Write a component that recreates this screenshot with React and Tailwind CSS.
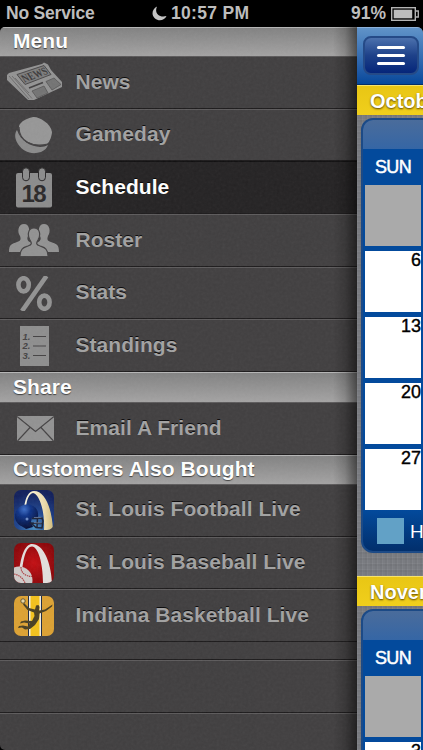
import React from "react"

const SHADOW = "[text-shadow:0_-1px_0_rgba(0,0,0,0.85)]"

function NewsIcon() {
  return (
    <svg width="58" height="40" viewBox="0 0 58 40">
      <path d="M2 13 L4 11 L37 2 L39 0.500 L43 2.500 L46 8 L57 20 L57 25 L29 38 L23 38 L2 18 Z" fill="#939393" />
      <path d="M4 14 L24 37 M7 14 L27 36.500 M10 16 L24 31" stroke="#605e5f" strokeWidth="0.7" fill="none" />
      <path d="M12 12.500 L39 3.500 L46 12.500 L20 22.500 Z" fill="#7d7d7d" stroke="#4a4849" strokeWidth="1" />
      <text x="0" y="0" transform="translate(19.500 20.500) rotate(-20) skewX(14)" fontFamily="Liberation Serif, serif" fontWeight="bold" fontSize="11.5" fill="#3c3a3b" textLength="26" lengthAdjust="spacingAndGlyphs">NEWS</text>
      <path d="M24 26 L38 20.500" stroke="#434142" strokeWidth="1.800" />
      <path d="M27 29 L39 24 L43 31 L32 36 Z M41 19.500 L49 16 L56 22.500 L47 28 Z" fill="#747474" stroke="#575556" strokeWidth="0.8" />
    </svg>
  )
}

function GamedayIcon() {
  return (
    <svg width="40" height="38" viewBox="0 0 40 38">
      <path d="M3 14 C0 18 1 24 4 28 C9 36 18 39 27 36 C31 34 33 32 34 29 C25 34 8 29 3 14 Z" fill="#8b8b8b" />
      <path d="M19 1 C24 0 37 7 38 16 C38 19 36 26 33 28 C26 31 12 28 7 20 C5 16 4 10 6 8 C9 4 14 2 19 1 Z" fill="#979797" />
      <path d="M5 11 C5 25 18 32 34 28" fill="none" stroke="#454344" strokeWidth="1.200" />
    </svg>
  )
}

function ScheduleIcon() {
  return (
    <svg width="38" height="41" viewBox="0 0 38 41">
      <rect x="1" y="6" width="36" height="34.500" rx="2" fill="#8c8c8c" />
      <rect x="7.500" y="0.800" width="7" height="13" rx="3.500" fill="#8c8c8c" stroke="#2b292a" strokeWidth="1" />
      <rect x="23.500" y="0.800" width="7" height="13" rx="3.500" fill="#8c8c8c" stroke="#2b292a" strokeWidth="1" />
      <text x="19" y="34.500" textAnchor="middle" fontFamily="Liberation Sans, sans-serif" fontWeight="bold" fontSize="24" textLength="25" fill="#2b292a">18</text>
    </svg>
  )
}

function RosterIcon() {
  return (
    <svg width="52" height="34" viewBox="0 0 52 34" fill="#929292">
      <path d="M1 29 C1 21 4 21 9 19 C13 18 13 16 12 13 C9 9 10 1 16 1 C22 1 22 9 20 13 C18 17 21 19 24 20 L24 29 Z" />
      <path d="M51 29 C51 21 48 21 43 19 C39 18 39 16 40 13 C43 9 42 1 36 1 C30 1 30 9 32 13 C34 17 31 19 28 20 L28 29 Z" />
      <path d="M12 33.500 C12 25 16 24.500 20 23 C24 22 24 20 22 17 C19 12 20 5 26 5 C32 5 33 12 30 17 C28 20 28 22 32 23 C36 24.500 40 25 40 33.500 Z" stroke="#454344" strokeWidth="1.200" />
    </svg>
  )
}

function StatsIcon() {
  return (
    <svg width="36" height="35" viewBox="0 0 36 35" fill="none" stroke="#929292">
      <ellipse cx="7.600" cy="8.800" rx="5.200" ry="6.600" strokeWidth="4.600" />
      <ellipse cx="28.400" cy="26.200" rx="5.200" ry="6.600" strokeWidth="4.600" />
      <path d="M30.500 0 L6 35" strokeWidth="4.600" />
    </svg>
  )
}

function StandingsIcon() {
  return (
    <svg width="29" height="40" viewBox="0 0 29 40">
      <rect width="29" height="40" fill="#8e8e8e" />
      <g fontFamily="Liberation Sans, sans-serif" fontStyle="italic" fontWeight="bold" fontSize="9.500" fill="#454344">
        <text x="2.500" y="13.500">1.</text>
        <text x="2.500" y="23">2.</text>
        <text x="2.500" y="32.500">3.</text>
      </g>
      <path d="M13 10.500 H26 M13 20 H26 M13 29.500 H26" stroke="#454344" strokeWidth="1.200" />
    </svg>
  )
}

function EmailIcon() {
  return (
    <svg width="37" height="25" viewBox="0 0 37 25" className="ml-[2px]">
      <rect width="37" height="25" fill="#929292" />
      <path d="M0 0.500 L18.500 15.500 L37 0.500 M0.500 25 L13 11.500 M36.500 25 L24 11.500" fill="none" stroke="#454344" strokeWidth="1.200" />
    </svg>
  )
}

function FootballIcon() {
  return (
    <svg width="40" height="40" viewBox="0 0 40 40" className="rounded-[7px]">
      <defs>
        <radialGradient id="fbBg" cx="0.5" cy="0.95" r="0.9">
          <stop offset="0" stopColor="#4a8fc4" />
          <stop offset="0.45" stopColor="#1f4690" />
          <stop offset="1" stopColor="#12205c" />
        </radialGradient>
        <linearGradient id="arch" x1="0" x2="1">
          <stop offset="0" stopColor="#fffbe6" />
          <stop offset="0.7" stopColor="#ecdcae" />
          <stop offset="1" stopColor="#d3bd7c" />
        </linearGradient>
        <radialGradient id="helmet" cx="0.4" cy="0.2" r="0.8">
          <stop offset="0" stopColor="#3f70c8" />
          <stop offset="0.35" stopColor="#0f3488" />
          <stop offset="1" stopColor="#050d35" />
        </radialGradient>
      </defs>
      <rect width="40" height="40" fill="url(#fbBg)" />
      <path d="M10 17 C12 6 15 1 20 1 C31 1 38 18 39 40 L30 40 C31 20 25 4 19 3 C15 4 13 9 12 17 Z" fill="url(#arch)" />
      <path d="M1 28 C0 19 7 14 14 14.500 C21 15 25 20 24 27 L18 28 L17 32 L19 37 L12 39 C9 36 3 36 1 28 Z" fill="url(#helmet)" />
      <path d="M18 28.500 L28 28 L29 31 L28 38 L22 37.500 L17 33 L28 33.500 M23.500 28 L23 37" fill="none" stroke="#1c2338" strokeWidth="1.500" />
      <path d="M20 27.500 L27.500 27.300 M20 32.700 L27.500 33" stroke="#8f9cb5" strokeWidth="0.6" />
      <circle cx="13" cy="29" r="1.500" fill="#6f8cc6" />
    </svg>
  )
}

function BaseballIcon() {
  return (
    <svg width="40" height="40" viewBox="0 0 40 40" className="rounded-[7px]">
      <defs>
        <radialGradient id="bbBg" cx="0.5" cy="0.5" r="0.7">
          <stop offset="0" stopColor="#c40f13" />
          <stop offset="1" stopColor="#7d0508" />
        </radialGradient>
      </defs>
      <rect width="40" height="40" fill="url(#bbBg)" />
      <path d="M5 30 C7 10 12 1 18 1 C29 1 37 18 38 40 L29 40 C29 20 24 3.500 18 3.500 C12 3.500 9 16 8 30 Z" fill="#e3dfdd" />
      <circle cx="5" cy="37" r="13.500" fill="#cfcbc9" />
      <path d="M7 24 C7 30 11 33 18 33.500 M0 31 C5 32 9 35 11 40" fill="none" stroke="#b0474a" strokeWidth="1.200" strokeDasharray="1.500 0.700" />
    </svg>
  )
}

function BasketballIcon() {
  return (
    <svg width="40" height="40" viewBox="0 0 40 40" className="rounded-[7px]">
      <rect width="40" height="40" fill="#dda233" />
      <rect x="14" width="14" height="40" fill="#1f2c45" />
      <rect x="15" width="12" height="40" fill="#f5f0e0" />
      <rect x="16.500" width="9" height="40" fill="#f3c21c" />
      <circle cx="9" cy="5" r="2.200" fill="#e9d9a8" stroke="#4a4023" strokeWidth="0.8" />
      <path d="M10 7 L15 12 L21 13.500 L22 9.500 L24.500 9 L25.500 11 L25 14.500 L31 13.500 L38.500 8.500 L38 10.500 L32 15 L25.500 17.500 L25 23 L21 29 L16 33 L11 33.500 L8 31.500 L4 32 L5 30 L9 29.500 L14 30.500 L15.500 27.500 L10 26.500 L6 27.500 L7 25.500 L11 24.500 L18 25 L20.500 20 L20 16.500 L13.500 14 L9 8.500 Z" fill="#4a4023" />
    </svg>
  )
}

const menu = [
  {
    title: "Menu",
    height: "h-[29px]",
    items: [
      { label: "News", Icon: NewsIcon },
      { label: "Gameday", Icon: GamedayIcon },
      { label: "Schedule", Icon: ScheduleIcon, active: true },
      { label: "Roster", Icon: RosterIcon },
      { label: "Stats", Icon: StatsIcon },
      { label: "Standings", Icon: StandingsIcon },
    ],
  },
  { title: "Share", height: "h-[30px]", items: [{ label: "Email A Friend", Icon: EmailIcon }] },
  {
    title: "Customers Also Bought",
    height: "h-[29px]",
    items: [
      { label: "St. Louis Football Live", Icon: FootballIcon },
      { label: "St. Louis Baseball Live", Icon: BaseballIcon },
      { label: "Indiana Basketball Live", Icon: BasketballIcon },
    ],
  },
]

function StatusBar() {
  return (
    <div className="flex h-[27px] shrink-0 items-center justify-between bg-black pl-[6px] pr-[4px] text-[17.500px] font-bold text-[#bdbdbd]">
      <span className="w-[146px] tracking-[-0.200px]">No Service</span>
      <span className="flex flex-1 items-center gap-[4px] whitespace-nowrap tracking-[0.300px]">
        <svg width="15" height="15" viewBox="0 0 15 15">
          <path d="M5 0.500 C0 3 -1 9 3 12.500 C7 16 13 14 14.500 10 C7 12 2 7 5 0.500 Z" fill="#c4c4c4" />
        </svg>
        10:57 PM
      </span>
      <span className="flex items-center justify-end gap-[5px]">
        91%
        <svg width="28" height="14" viewBox="0 0 28 14">
          <rect x="0.700" y="0.700" width="23.600" height="12.600" fill="none" stroke="#b4b4b4" strokeWidth="1.400" />
          <rect x="2.700" y="2.700" width="18.500" height="8.600" fill="#bdbdbd" />
          <path d="M25 4 H27.300 V10 H25" fill="none" stroke="#b4b4b4" strokeWidth="1.300" />
        </svg>
      </span>
    </div>
  )
}

function SectionHeader({ title, height }) {
  return (
    <div
      className={`${height} flex shrink-0 items-center border-t border-[#b5b5b5] bg-linear-to-b from-[#828282] to-[#a4a3a3] pb-[2px] pl-[13px] text-[21px] font-bold tracking-[0.100px] text-white [text-shadow:0_1px_1px_rgba(0,0,0,0.6)]`}
    >
      {title}
    </div>
  )
}

function MenuRow({ label, Icon, active }) {
  return (
    <div
      className={`flex h-[52.700px] shrink-0 items-center border-b border-t border-b-[#1d1b1c] ${
        active ? "border-t-[#111011] bg-[#252324]" : "border-t-[#5d5b5c] bg-[#413f40]"
      }`}
    >
      <div className="flex w-[68px] shrink-0 justify-center">
        <Icon />
      </div>
      <span
        className={`pb-[2px] pl-[7.500px] text-[21px] font-bold tracking-[0.050px] whitespace-nowrap ${SHADOW} ${active ? "text-white" : "text-[#a2a2a2]"}`}
      >
        {label}
      </span>
    </div>
  )
}

function Month({ name, days, legend }) {
  return (
    <div className="w-[300px] shrink-0">
      <div className="h-[30px] border-t border-[#f7e36a] bg-linear-to-b from-[#e9c614] to-[#f0cf1c] pl-[13px] text-[20px] leading-[30px] font-bold text-white [text-shadow:0_1px_2px_rgba(70,50,0,0.9)]">
        {name}
      </div>
      <div className="mt-[3px] ml-[4px] overflow-hidden rounded-[12px] border-2 border-[#1c4a86] bg-[#034a9c]">
        <div className="h-[29px] bg-linear-to-b from-[#4a6c9b] to-[#3566a5]" />
        <div className="flex h-[36px] w-[60px] items-center justify-center pt-px text-[18px] tracking-[-0.600px] text-white [-webkit-text-stroke:0.500px_white]">
          SUN
        </div>
        <div className="flex flex-col gap-[5px] pl-[2px]">
          {days.map((day, idx) => (
            <div
              key={idx}
              className={`h-[61px] w-[56px] text-right text-[18px] leading-[18px] text-black [-webkit-text-stroke:0.400px_black] ${day ? "bg-white" : "bg-[#aaaaaa]"}`}
            >
              {day}
            </div>
          ))}
        </div>
        {legend && (
          <div className="flex h-[41px] items-center gap-[6px] bg-linear-to-b from-[#034a9c] to-[#022f6c] pl-[14px] text-[19px] text-white">
            <div className="h-[26px] w-[27px] bg-[#62a1c6]" />
            <span className="pt-[3px]">{legend}</span>
          </div>
        )}
      </div>
    </div>
  )
}

function SchedulePanel() {
  return (
    <div className="flex w-[66px] shrink-0 flex-col overflow-hidden rounded-tr-[6px] bg-[#7a7c81] bg-[repeating-linear-gradient(90deg,rgba(255,255,255,0.04)_0_1px,transparent_1px_3px,rgba(0,0,0,0.03)_3px_5px),repeating-linear-gradient(0deg,rgba(255,255,255,0.04)_0_1px,transparent_1px_4px,rgba(0,0,0,0.03)_4px_6px)]">
      <div className="flex h-[58px] shrink-0 items-center border-t border-b border-t-[#8db1da] border-b-[#052e66] bg-linear-to-b from-[#6093c8] to-[#05489b] pb-px pl-[6px]">
        <button className="flex h-[39px] w-[56px] shrink-0 flex-col items-center justify-center gap-[5px] rounded-[8px] border-2 border-[#254a87] bg-linear-to-b from-[#4c71ad] via-[#1e4189] to-[#06257a]">
          <span className="h-[3px] w-[28px] rounded-full bg-white" />
          <span className="h-[3px] w-[28px] rounded-full bg-white" />
          <span className="h-[3px] w-[28px] rounded-full bg-white" />
        </button>
      </div>
      <Month name="October" days={["", "6", "13", "20", "27"]} legend="Home" />
      <div className="h-[23px] shrink-0" />
      <Month name="November" days={["", "3"]} />
    </div>
  )
}

export default function App() {
  return (
    <div className="flex h-[750px] w-[423px] flex-col overflow-hidden bg-black font-['Liberation_Sans',Arial,sans-serif]">
      <StatusBar />
      <div className="flex min-h-0 flex-1">
        <div className="relative flex w-[357px] shrink-0 flex-col overflow-hidden rounded-tl-[5px] rounded-bl-[5px] bg-[#413f40]">
          {menu.map((section) => (
            <React.Fragment key={section.title}>
              <SectionHeader title={section.title} height={section.height} />
              {section.items.map((item) => (
                <MenuRow key={item.label} {...item} />
              ))}
            </React.Fragment>
          ))}
          {/* Empty table rows below the list */}
          <div className="h-[18px] shrink-0 border-b border-[#1d1b1c]" />
          <div className="h-[53px] shrink-0 border-t border-b border-t-[#5d5b5c] border-b-[#1d1b1c]" />
          <div className="h-[53px] shrink-0 border-t border-[#5d5b5c]" />
          {/* Fabric grain */}
          <svg className="pointer-events-none absolute inset-0 h-full w-full opacity-[0.06]">
            <filter id="grain">
              <feTurbulence type="fractalNoise" baseFrequency="0.35" numOctaves="2" />
              <feColorMatrix type="saturate" values="0" />
            </filter>
            <rect width="100%" height="100%" filter="url(#grain)" />
          </svg>
          {/* Shadow cast by the schedule panel */}
          <div className="pointer-events-none absolute inset-y-0 right-0 w-[24px] bg-linear-to-r from-transparent via-black/15 to-black/50" />
        </div>
        <SchedulePanel />
      </div>
    </div>
  )
}
